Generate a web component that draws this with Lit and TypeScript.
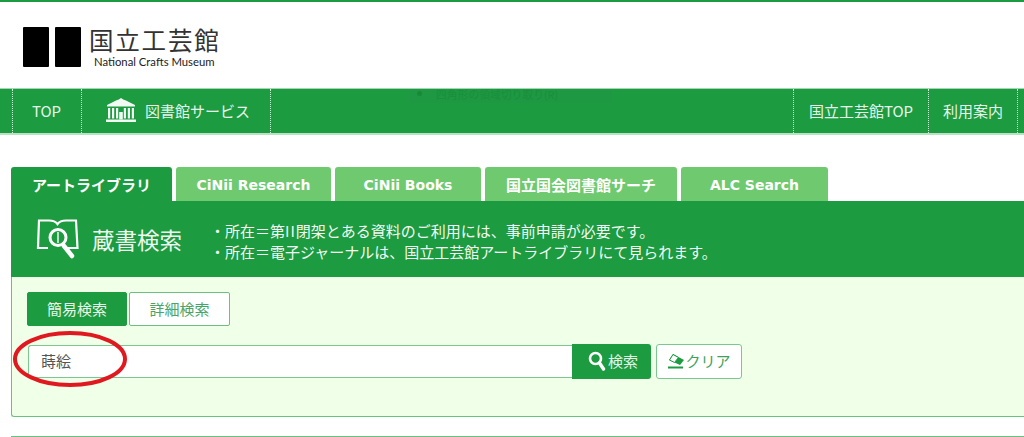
import { LitElement, html, css } from "lit";
import { customElement } from "lit/decorators.js";

@customElement("app-root")
export class AppRoot extends LitElement {
  static styles = css`
    :host { display: block; width: 1024px; height: 437px; overflow: hidden; position: relative; background: #fff; font-family: "Noto Sans CJK JP", "Noto Sans", sans-serif; color: #333; }
    * { box-sizing: border-box; }
    .top { height: 88px; border-top: 2px solid #1c9b40; display: flex; align-items: flex-start; padding: 25px 0 0 23px; gap: 6px; }
    .blocks { display: flex; gap: 6px; }
    .blocks i { display: block; width: 26px; height: 40px; background: #000; border-radius: 1px; }
    .wordmark { display: flex; flex-direction: column; margin-left: 2px; padding-top: 2px; }
    .wordmark b { font-family: "Liberation Sans", "Noto Sans CJK JP", sans-serif; font-weight: 400; font-size: 24.5px; letter-spacing: 1.8px; line-height: 26px; color: #333; white-space: nowrap; }
    .wordmark span { font-family: Lato, "Noto Sans", sans-serif; font-size: 11.3px; line-height: 12px; margin: 1px 0 0 5px; color: #222; white-space: nowrap; }
    nav { position: relative; height: 47px; background: #1c9b40; border-top: 1px solid #a5d7b2; border-bottom: 2px solid #b9e2c4; display: flex; justify-content: space-between; color: #e6f5ea; font-size: 15px; }
    .group { display: flex; }
    .item { display: flex; align-items: center; height: 100%; border-left: 1px dotted #d8efdd; white-space: nowrap; padding-bottom: 2px; }
    .item.last { border-right: 1px dotted #d8efdd; }
    .i-top { margin-left: 12px; width: 69px; justify-content: center; padding-right: 1px; }
    .i-lib { width: 190px; padding-left: 24px; gap: 9px; }
    .i-crafts { width: 135px; justify-content: center; }
    .i-use { width: 90px; justify-content: center; }
    .i-use.last { margin-right: 6px; }
    .ghost { position: absolute; left: 410px; top: 0; width: 202px; height: 14px; background: #1e9842; color: #198f3c; font-size: 10.8px; line-height: 11px; padding-left: 26px; white-space: nowrap; }
    .ghost i { position: absolute; left: 7px; top: 2px; width: 5px; height: 5px; border-radius: 50%; background: #178a38; }
    .tabs { display: flex; gap: 4px; margin: 32px 0 0 11px; height: 34px; }
    .tab { height: 34px; background: #6fc96f; color: #fff; font-weight: 700; font-size: 15px; border-radius: 3px 3px 0 0; display: flex; align-items: center; justify-content: center; white-space: nowrap; }
    .tab.on { background: #1c9b40; }
    .tab.lat { font-family: "DejaVu Sans", "Noto Sans CJK JP", sans-serif; font-size: 14px; padding-top: 2px; }
    .panel { margin: 0 0 0 11px; height: 216px; border: 1px solid #6cc07f; border-right: 0; border-top: 0; background: #f0ffe8; border-radius: 0 0 0 3px; }
    .head { height: 76px; margin-left: -1px; background: #1c9b40; color: #fff; display: flex; align-items: center; padding-left: 25px; }
    .title { font-size: 22.5px; margin-left: 12px; white-space: nowrap; width: 110px; color: #eef9f0; }
    .notes { margin-left: 8px; font-size: 15px; line-height: 21px; color: #f1faf3; white-space: nowrap; padding-top: 3px; }
    .roman { letter-spacing: 1px; }
    .body { padding: 15px 0 0 15px; }
    .btns { display: flex; gap: 2px; }
    .seg { width: 101px; height: 34px; border: 1px solid #1c9b40; border-radius: 2px; font-size: 15px; display: flex; align-items: center; justify-content: center; padding-bottom: 1px; }
    .seg.on { background: #1c9b40; color: #e9f7ec; width: 100px; }
    .seg.off { background: #fff; color: #4aa565; border-color: #6cc07f; }
    .search { display: flex; margin-top: 19px; align-items: stretch; }
    .input { width: 544px; height: 33px; margin-left: 1px; background: #fff; border: 1px solid #7cc78f; border-right: 0; border-radius: 3px 0 0 3px; display: flex; align-items: center; padding: 0 0 3px 12px; font-size: 15px; color: #555; }
    .go { width: 79px; height: 35px; margin-top: -1px; background: #1c9b40; color: #e3f4e7; border-radius: 0 3px 3px 0; font-size: 15px; display: flex; align-items: center; justify-content: center; gap: 2px; padding: 0 0 2px 3px; }
    .clear { margin-left: 5px; margin-top: -1px; width: 86px; height: 35px; background: #fff; border: 1px solid #7cc78f; border-radius: 3px; color: #3da35a; font-size: 15px; display: flex; align-items: center; justify-content: center; padding-bottom: 2px; }
    .rule { margin: 19px 0 0 11px; border-top: 1px solid #6cc07f; }
    .circle { position: absolute; left: 12px; top: 329px; pointer-events: none; }
  `;

  render() {
    const tabs: [string, number, string][] = [
      ["アートライブラリ", 161, "on"],
      ["CiNii Research", 155, "lat"],
      ["CiNii Books", 146, "lat"],
      ["国立国会図書館サーチ", 192, ""],
      ["ALC Search", 147, "lat"],
    ];
    return html`
      <div class="top">
        <div class="blocks"><i></i><i></i></div>
        <div class="wordmark"><b>国立工芸館</b><span>National Crafts Museum</span></div>
      </div>
      <nav>
        <div class="ghost"><i></i>四角形の領域切り取り(R)</div>
        <div class="group">
          <div class="item i-top">TOP</div>
          <div class="item i-lib last">
            <svg width="30" height="24" viewBox="0 0 30 24" fill="#f1faf3">
              <path d="M15 0 Q17 1.5 20 2.5 L29 7 V8.5 H1 V7 L10 2.5 Q13 1.5 15 0 Z"/>
              <rect x="0" y="21.5" width="30" height="2.5"/>
              <rect x="2" y="10" width="2.2" height="10.5"/><rect x="6" y="10" width="2.2" height="10.5"/>
              <rect x="10" y="10" width="2.2" height="10.5"/>
              <rect x="17.8" y="10" width="2.2" height="10.5"/><rect x="21.8" y="10" width="2.2" height="10.5"/><rect x="25.8" y="10" width="2.2" height="10.5"/>
              <rect x="13.2" y="14" width="3.6" height="7.5"/>
            </svg>
            図書館サービス
          </div>
        </div>
        <div class="group">
          <div class="item i-crafts">国立工芸館TOP</div>
          <div class="item i-use last">利用案内</div>
        </div>
      </nav>
      <div class="tabs">
        ${tabs.map(([t, w, cls]) => html`<div class="tab ${cls}" style="width:${w}px">${t}</div>`)}
      </div>
      <div class="panel">
        <div class="head">
          <svg width="44" height="42" viewBox="0 0 44 42" fill="none" stroke="#fff" stroke-width="2.2">
            <path d="M12 30 H2 L3 2.5 H13 Q19 2.5 21.5 6 Q24 2.5 30 2.5 H40 L41.5 30 H32"/>
            <circle cx="22" cy="19.5" r="8" stroke-width="3"/>
            <path d="M22 14 V25" stroke-width="1.4"/>
            <path d="M28 28 L36 38" stroke-width="4.5" stroke-linecap="round"/>
          </svg>
          <div class="title">蔵書検索</div>
          <div class="notes">
            <div>・所在＝第<span class="roman">II</span>閉架とある資料のご利用には、事前申請が必要です。</div>
            <div>・所在＝電子ジャーナルは、国立工芸館アートライブラリにて見られます。</div>
          </div>
        </div>
        <div class="body">
          <div class="btns">
            <div class="seg on">簡易検索</div>
            <div class="seg off">詳細検索</div>
          </div>
          <div class="search">
            <div class="input">蒔絵</div>
            <div class="go">
              <svg width="18" height="20" viewBox="0 0 18 20" fill="none" stroke="#fff">
                <circle cx="7.5" cy="7.5" r="5.5" stroke-width="2.6"/>
                <path d="M11.5 12 L15.5 18" stroke-width="3.4" stroke-linecap="round"/>
              </svg>
              検索
            </div>
            <div class="clear">
              <svg width="18" height="16" viewBox="0 0 18 16">
                <path d="M6 1 L17 7 L13 12 L2 7 Z" fill="#1c9b40"/>
                <path d="M6 1.5 L11.5 4.5 L7.5 9.5 L2.5 7 Z" fill="#fff" stroke="#1c9b40"/>
                <rect x="1" y="13.5" width="15" height="2" fill="#1c9b40"/>
              </svg>
              クリア
            </div>
          </div>
        </div>
      </div>
      <div class="rule"></div>
      <svg class="circle" width="118" height="62" viewBox="0 0 118 62" fill="none">
        <ellipse cx="58" cy="30" rx="55" ry="26" stroke="#e0181f" stroke-width="4"/>
      </svg>
    `;
  }
}
